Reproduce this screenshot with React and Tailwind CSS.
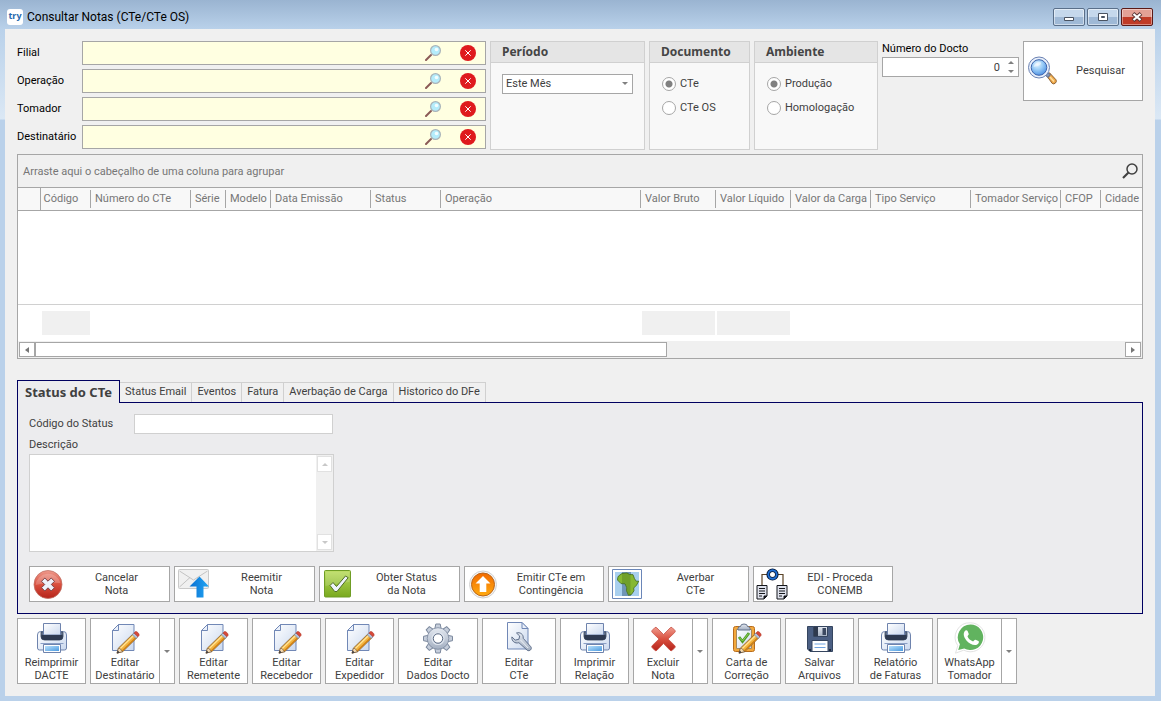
import { useState } from "react";

const filters = ["Filial", "Operação", "Tomador", "Destinatário"];

const columns = [
  { label: "", width: 22 },
  { label: "Código", width: 50, total: true },
  { label: "Número do CTe", width: 100 },
  { label: "Série", width: 35 },
  { label: "Modelo", width: 45 },
  { label: "Data Emissão", width: 100 },
  { label: "Status", width: 70 },
  { label: "Operação", width: 200 },
  { label: "Valor Bruto", width: 75, total: true },
  { label: "Valor Líquido", width: 75, total: true },
  { label: "Valor da Carga", width: 80 },
  { label: "Tipo Serviço", width: 100 },
  { label: "Tomador Serviço", width: 90 },
  { label: "CFOP", width: 40 },
  { label: "Cidade", width: 100 },
];

const tabs = ["Status do CTe", "Status Email", "Eventos", "Fatura", "Averbação de Carga", "Historico do DFe"];

/* Gradients shared by all the icons */
function IconDefs() {
  return (
    <svg className="absolute h-0 w-0" aria-hidden="true">
      <defs>
        <linearGradient id="paper" x1="0" y1="0" x2="1" y2="1">
          <stop offset="0" stopColor="#ffffff" />
          <stop offset="1" stopColor="#cbd9ef" />
        </linearGradient>
        <linearGradient id="steel" x1="0" y1="0" x2="0" y2="1">
          <stop offset="0" stopColor="#e4e9f1" />
          <stop offset="1" stopColor="#a3afc1" />
        </linearGradient>
        <linearGradient id="dark" x1="0" y1="0" x2="0" y2="1">
          <stop offset="0" stopColor="#7385a0" />
          <stop offset="1" stopColor="#232e42" />
        </linearGradient>
        <linearGradient id="red" x1="0" y1="0" x2="0" y2="1">
          <stop offset="0" stopColor="#ef9a8c" />
          <stop offset="0.5" stopColor="#d9503f" />
          <stop offset="1" stopColor="#b5231a" />
        </linearGradient>
        <linearGradient id="green" x1="0" y1="0" x2="0" y2="1">
          <stop offset="0" stopColor="#b9dc5c" />
          <stop offset="1" stopColor="#79a91e" />
        </linearGradient>
        <linearGradient id="orange" x1="0" y1="0" x2="0" y2="1">
          <stop offset="0" stopColor="#f26a00" />
          <stop offset="1" stopColor="#ffab10" />
        </linearGradient>
        <linearGradient id="blue" x1="0" y1="0" x2="1" y2="1">
          <stop offset="0" stopColor="#b9e0fb" />
          <stop offset="1" stopColor="#4c9be0" />
        </linearGradient>
        <linearGradient id="arrow" x1="0" y1="0" x2="1" y2="0">
          <stop offset="0" stopColor="#0a6fd0" />
          <stop offset="1" stopColor="#22a7f5" />
        </linearGradient>
        <radialGradient id="lens" cx="0.4" cy="0.3" r="0.8">
          <stop offset="0" stopColor="#e3f3ff" />
          <stop offset="0.4" stopColor="#9fd0f8" />
          <stop offset="1" stopColor="#3f86e0" />
        </radialGradient>
      </defs>
    </svg>
  );
}

function Icon({ children }) {
  return (
    <svg viewBox="0 0 32 32" className="h-8 w-8 shrink-0" fill="none" aria-hidden="true">
      {children}
    </svg>
  );
}

function Pencil() {
  return (
    <g>
      <path d="M9.5 26 24.3 11.6l4 3.8L13.8 29.6 8 31.2z" fill="#f3b33e" stroke="#7e5a32" strokeWidth="0.8" />
      <path d="M11.2 26.6 25.2 13" stroke="#ffe49a" strokeWidth="1.3" />
      <path d="m13.3 28.9 14-13.6" stroke="#cf7f14" strokeWidth="1.2" />
      <path d="m8 31.2 1.5-5.2 2.2 1.1.5 1.3 1.6 1.2z" fill="#f6dcb2" stroke="#6d5238" strokeWidth="0.6" />
      <path d="m8 31.2.8-2.8 1.9 2z" fill="#30343e" />
      <path d="m23.2 12.7 1.8-1.8 4 3.8-1.9 1.8z" fill="#b6c2da" stroke="#6d7f9f" strokeWidth="0.6" />
      <path d="m25 10.9 1-1c1.5-1.3 5 2 3.9 3.800l-.9 1z" fill="#d94a3a" stroke="#a93529" strokeWidth="0.6" />
    </g>
  );
}

function EditIcon() {
  return (
    <Icon>
      <path d="M9.5 2.5h15.5v26H3.5V8.5z" fill="url(#paper)" stroke="#7188b6" />
      <path d="M9.5 2.5v6h-6z" fill="#eaf0fa" stroke="#7188b6" />
      <Pencil />
    </Icon>
  );
}

function PrinterIcon() {
  return (
    <Icon>
      <path d="M1.5 13q0-3.5 3-3.5h23q3 0 3 3.5v13q0 2-2 2h-25q-2 0-2-2z" fill="url(#paper)" stroke="#6e83ad" />
      <path d="M5 10h22v4.5q0 3.5-3.5 3.5h-15Q5 18 5 14.5z" fill="url(#dark)" stroke="#34415a" strokeWidth="0.8" />
      <path d="M7.5 1.5h17V13h-17z" fill="url(#paper)" stroke="#6e83ad" />
      <path d="M5.500 13h21v1.8q0 2.7-3 2.7h-15q-3 0-3-2.7z" fill="#2e3a51" />
      <path d="M4.5 21.5h23" stroke="#8a9fc6" />
      <path d="M7.5 22.5h17v8h-17z" fill="#fff" stroke="#6e83ad" />
      <path d="M9 24h14v5H9z" fill="url(#blue)" />
    </Icon>
  );
}

function GearIcon() {
  const teeth = [0, 45, 90, 135, 180, 225, 270, 315];
  return (
    <Icon>
      {teeth.map((angle) => (
        <path key={angle} d="m12.8 7 1-5h4.4l1 5z" transform={`rotate(${angle} 16 16.5)`} fill="#c6cedb" stroke="#7c899e" />
      ))}
      <circle cx="16" cy="16.5" r="10.8" fill="url(#steel)" stroke="#7c899e" strokeWidth="0.8" />
      <circle cx="16" cy="16.5" r="6" stroke="#dfe5ee" strokeWidth="1.2" />
      <circle cx="16" cy="16.5" r="4.7" fill="#fff" stroke="#5d6c85" />
    </Icon>
  );
}

function WrenchIcon() {
  return (
    <Icon>
      <path d="M4.5.5H19l6 6V27H4.5z" fill="url(#paper)" stroke="#7188b6" />
      <path d="M19 .5v6h6z" fill="#eaf0fa" stroke="#7188b6" />
      <path
        d="M13.5 11c3.5-1.2 7.2 1.3 6.7 5.3l7.6 8.4c1.7 2.2-1.2 5.2-3.6 3.5l-8.3-7.5c-4 1.2-7.6-1.6-7-5.8l3.3 3.2 3.7-.8.8-3.3z"
        fill="url(#steel)"
        stroke="#5f6f8b"
      />
      <path d="m17.5 18 7.7 8" stroke="#eef2f8" />
    </Icon>
  );
}

function DeleteIcon() {
  return (
    <Icon>
      <path
        d="m5 8.5 3-3q1-.5 2 .5l6.5 6.5L23 6q1-1 2-.5l3 3q.7 1-.3 2L21 17l6.7 6.5q1 1 .3 2l-3 3q-1 .7-2-.3l-6.5-6.700-6.5 6.700q-1 1-2 .3l-3-3q-.7-1 .3-2L12 17l-6.700-6.500q-1-1-.3-2z"
        fill="url(#red)"
        stroke="#c75246"
        strokeWidth="0.8"
      />
    </Icon>
  );
}

function ClipboardIcon() {
  return (
    <Icon>
      <rect x="2.5" y="4.5" width="21" height="25" rx="2" fill="#f3a83c" stroke="#b86c1c" />
      <path d="M5.5 7.5h15v19h-15z" fill="url(#paper)" stroke="#a98a5c" />
      <path d="M7 6.5q0-2 2.5-2 0-2.5 3.5-2.5t3.5 2.5q2.5 0 2.5 2V8H7z" fill="url(#steel)" stroke="#66758e" />
      <path d="m8 15 3.5 4.5L18 11" stroke="#4e9b25" strokeWidth="2.8" />
      <path d="m8.3 15.5 3.2 3.5 6-7.4" stroke="#8fd15b" />
      <Pencil />
    </Icon>
  );
}

function FloppyIcon() {
  return (
    <Icon>
      <path d="M3.5 4.5h25v25H6l-2.5-2.5z" fill="#4b5f83" stroke="#35455f" />
      <path d="M9.5 4.5h14v10h-14z" fill="url(#steel)" stroke="#35455f" />
      <path d="M10 5h4v9h-4z" fill="#2f3a4e" />
      <path d="M18.5 6H22v7h-3.5z" fill="#3b4860" />
      <path d="M8 18.5h16v11H8z" fill="#fff" stroke="#35455f" />
      <path d="M10.5 22h11M10.5 25.5h11" stroke="#6fa3df" />
      <path d="M5 28h2M25 28h2" stroke="#202b3e" strokeWidth="2" />
    </Icon>
  );
}

function WhatsAppIcon() {
  return (
    <Icon>
      <path d="M16.5.8a14.500 14.500 0 1 1-6.7 27.400L1.500 31.200l2.300-7.600A14.500 14.500 0 0 1 16.500.8z" fill="#fff" stroke="#e3e3e3" />
      <path d="M16.500 2.500a12.800 12.800 0 1 1-6.300 24l-6 1.500 1.700-5.700A12.800 12.800 0 0 1 16.500 2.500z" fill="#61b35f" />
      <path
        d="M10.5 9.500c1-1.500 2.500-1.600 3.100-.4l1.100 2.700c.4.900-.9 1.900-1.200 2.500.7 2.400 3.100 4.400 5.600 5.100.7-.4 1.400-2 2.400-1.700l3 1.400c.9.500.3 2.700-1.300 3.500-3.500 1.700-8-1.300-10.300-3.700-2.200-2.400-4.300-6.300-2.400-9.400z"
        fill="#fff"
      />
    </Icon>
  );
}

function CancelIcon() {
  return (
    <Icon>
      <circle cx="16" cy="16.5" r="14" fill="url(#red)" stroke="#c07468" strokeWidth="0.8" />
      <path d="M3.5 17A12.8 12.8 0 0 1 28.5 15Q16 14 3.5 17z" fill="#fff" opacity="0.2" />
      <path
        d="m9.5 13.3 3.3-3.3L16 13.2l3.2-3.2 3.3 3.3-3.2 3.2 3.2 3.2-3.3 3.3-3.2-3.2-3.2 3.2-3.3-3.3 3.2-3.2z"
        fill="#eef2fa"
        stroke="#7c3f42"
        strokeLinejoin="round"
      />
    </Icon>
  );
}

function ResendIcon() {
  return (
    <Icon>
      <rect x="1.5" y="1.5" width="30" height="19" rx="1" fill="#f0f0f0" stroke="#c9c9c9" />
      <path d="m2.5 3 14 9 14-9M2.5 19 13 9.5M30.5 19 20 9.5" stroke="#c3c3c3" />
      <path d="M22.5 8.5 32 18.5h-5.5v11h-7v-11h-7z" fill="url(#arrow)" />
    </Icon>
  );
}

function CheckIcon() {
  return (
    <Icon>
      <rect x="2.5" y="2.5" width="26" height="26.5" rx="1" fill="url(#green)" stroke="#6f9d25" />
      <path d="M3.5 3.5h24V14Q16 15 3.5 18z" fill="#fff" opacity="0.15" />
      <path d="m8 17.5 3-3 3.5 4 9-10.5 2.7 1.7L15 23.5h-2.3z" fill="#eef3fa" stroke="#4f6e25" strokeLinejoin="round" />
    </Icon>
  );
}

function UploadIcon() {
  return (
    <Icon>
      <circle cx="16" cy="16.5" r="13.5" fill="#f4f4f4" stroke="#d2d2d2" />
      <circle cx="16" cy="16.5" r="11.5" fill="url(#orange)" stroke="#b9651c" />
      <path d="m16 8 7.5 7.5h-4.2V24h-6.6v-8.5H8.5z" fill="#fff" />
    </Icon>
  );
}

function AfricaIcon() {
  return (
    <Icon>
      <path d="M1.5 1.5h29v29h-29z" fill="#fff" stroke="#6a86b8" />
      <path d="M4 4h24v24H4z" fill="#a8cfee" />
      <path d="M11 4h9v24h-9z" fill="#6f95b5" />
      <path
        d="M7.5 8 11 5.5l5-.5 2.500 1.500 3.500.2 1.500 4 1.700 2.500h2.500l-2.200 4-2.800 2.800.3 2.800-2.600 3.700-2.900.8-2-4.600.3-2.900-1.700-4-4.100-.2-3.500-3.600.3-2.500z"
        fill="#86b832"
        stroke="#41691a"
        strokeWidth="0.8"
      />
      <path d="M11 6v9l3.600.5 1.700 4-.4 3 2 4.500h1.600V6.700L16 5.500z" fill="#4f7d1e" opacity="0.4" />
    </Icon>
  );
}

function EdiIcon() {
  return (
    <Icon>
      <path d="M6 18V6.5h5M27 18V6.5h-6" stroke="#5a4326" strokeWidth="1.2" />
      <circle cx="16.5" cy="6.5" r="4.3" fill="#fff" stroke="#06152e" strokeWidth="3.6" />
      <circle cx="16.5" cy="6.5" r="4.2" stroke="#1f6fd6" strokeWidth="1.9" />
      {[1, 21].map((x) => (
        <g key={x}>
          <path d={`M${x} 17.5h10v10.5l-3 3h-7z`} fill="#dfe2ec" stroke="#15171c" />
          <path d={`M${x + 2} 20.5h6m-6 2.5h6m-6 2.5h6m-6 2.5h3`} stroke="#15171c" />
          <path d={`M${x + 7} 31v-3h3z`} fill="#15171c" stroke="#15171c" />
        </g>
      ))}
    </Icon>
  );
}

function SearchIcon() {
  return (
    <Icon>
      <path d="m19.5 20.500 3-2.700 6.500 7q1 1.700-.6 3.300-1.700 1.500-3.200.3z" fill="#f0a94a" stroke="#8d6233" />
      <path d="m18 19.500 2.500-2.500 3 3-2.700 2.500z" fill="#8495b5" stroke="#56688c" />
      <path d="m23 22 4 4.500" stroke="#ffe0a0" strokeWidth="1.5" />
      <circle cx="12" cy="12.500" r="10.5" fill="#e9f0fb" stroke="#6b82b3" />
      <circle cx="12" cy="12.500" r="7.8" fill="url(#lens)" stroke="#3d64ac" />
      <path d="M6.5 12A5.6 5.6 0 0 1 14 7.5q1 3-7.500 4.500z" fill="#fff" opacity="0.5" />
    </Icon>
  );
}

function LookupIcon() {
  return (
    <svg viewBox="0 0 16 16" className="h-4 w-4" fill="none" aria-hidden="true">
      <path d="m1 15 5-5" stroke="#8b5a56" strokeWidth="2" strokeLinecap="round" />
      <circle cx="10.5" cy="5.5" r="4.9" fill="#b4ecfb" stroke="#aab3b8" strokeWidth="1.2" />
      <circle cx="11.5" cy="4.5" r="1.8" fill="#f2fdff" />
    </svg>
  );
}

function ClearIcon() {
  return (
    <svg viewBox="0 0 16 16" className="h-4 w-4" aria-hidden="true">
      <circle cx="8" cy="8" r="8" fill="#df1a1d" />
      <path d="m5.3 5.3 5.4 5.4m0-5.4-5.4 5.4" stroke="#fff" />
    </svg>
  );
}

function Triangle({ className = "" }) {
  return (
    <svg viewBox="0 0 6 3" className={`h-[3px] w-1.5 shrink-0 ${className}`} aria-hidden="true">
      <path d="M0 0h6L3 3z" fill="currentColor" />
    </svg>
  );
}

function SideTriangle({ className = "" }) {
  return (
    <svg viewBox="0 0 4 6" className={`h-1.5 w-1 shrink-0 ${className}`} aria-hidden="true">
      <path d="M4 0v6L0 3z" fill="currentColor" />
    </svg>
  );
}

function TitleBar() {
  const control =
    "flex h-[18px] w-8 items-center justify-center rounded-[2px] border border-[#5a6f89] bg-linear-to-b from-[#c5d8ec] from-50% to-[#9fb9d6] to-50% inset-ring inset-ring-white/50";
  return (
    <header className="flex h-[29px] shrink-0 items-center bg-linear-to-b from-[#9ab4d1] to-[#b9d1ea] pt-1 pr-2 pl-[7px]">
      <span className="flex h-4 w-4 items-center justify-center rounded-[3px] bg-white pb-0.5 font-['Noto_Sans',sans-serif] text-[9px] leading-none font-bold text-[#2568ae]">
        try
      </span>
      <h1 className="ml-1 flex-1 text-[12px] text-black">Consultar Notas (CTe/CTe OS)</h1>
      <div className="flex gap-0.5">
        <button type="button" aria-label="Minimizar" className={control}>
          <svg viewBox="0 0 12 10" className="mt-1 h-2.5 w-3">
            <path d="M1.5 3.5h9v3h-9z" fill="#fff" stroke="#4a5361" />
          </svg>
        </button>
        <button type="button" aria-label="Maximizar" className={control}>
          <svg viewBox="0 0 12 10" className="h-2.5 w-3">
            <path d="M1.5 1.5h9v7h-9z" fill="#fff" stroke="#4a5361" />
            <path d="M4.5 4.5h3v1h-3z" fill="#8ba5c4" stroke="#4a5361" />
          </svg>
        </button>
        <button
          type="button"
          aria-label="Fechar"
          className="flex h-[18px] w-8 items-center justify-center rounded-[2px] border border-[#5b1a17] bg-linear-to-b from-[#e3a196] from-50% to-[#c03b27] to-50% inset-ring inset-ring-white/40"
        >
          <svg viewBox="0 0 12 10" className="h-2.5 w-3">
            <path d="m2 1.5 8 7m0-7-8 7" stroke="#5a3535" strokeWidth="4" />
            <path d="m2.5 2 7 6m0-6-7 6" stroke="#fff" strokeWidth="2.2" />
          </svg>
        </button>
      </div>
    </header>
  );
}

function Group({ title, className, children }) {
  return (
    <fieldset className={`${className} flex shrink-0 flex-col border border-[#d0d0d0] bg-[#f8f8f8]`}>
      <h2 className="h-[21px] border-b border-[#d0d0d0] bg-[#e5e5e5] pl-[11px] font-['Noto_Sans',sans-serif] text-[12px] leading-5 font-bold text-[#454545]">
        {title}
      </h2>
      {children}
    </fieldset>
  );
}

function RadioList({ name, options }) {
  return (
    <div className="pt-[9px] pl-3">
      {options.map((option, i) => (
        <label key={option} className="flex h-6 items-center gap-1">
          <input
            type="radio"
            name={name}
            defaultChecked={i === 0}
            className="h-3.5 w-3.5 appearance-none rounded-full border border-[#a6a6a6] bg-white checked:bg-[radial-gradient(circle,#808080_3px,white_4px)]"
          />
          {option}
        </label>
      ))}
    </div>
  );
}

function Filters() {
  return (
    <section className="flex items-stretch gap-1">
      <div className="flex min-w-0 flex-1 flex-col gap-1 pb-px text-black">
        {filters.map((name) => (
          <div key={name} className="flex h-6 items-center">
            <label htmlFor={name} className="w-[65px] shrink-0">
              {name}
            </label>
            <div className="flex h-6 min-w-0 flex-1 items-center border border-[#a6a6a6] bg-[#ffffe1] pr-[9px]">
              <input id={name} className="h-full min-w-0 flex-1 bg-transparent px-1 outline-none" />
              <button type="button" aria-label={`Procurar ${name}`}>
                <LookupIcon />
              </button>
              <button type="button" aria-label={`Limpar ${name}`} className="ml-[19px]">
                <ClearIcon />
              </button>
            </div>
          </div>
        ))}
      </div>

      <Group title="Período" className="w-[155px]">
        <div className="relative mx-[11px] mt-[11px]">
          <select
            aria-label="Período"
            className="block h-5 w-full appearance-none border border-[#a6a6a6] bg-white pl-[3px] outline-none"
          >
            <option>Este Mês</option>
          </select>
          <Triangle className="pointer-events-none absolute top-2 right-[5px] text-[#808080]" />
        </div>
      </Group>

      <Group title="Documento" className="w-[101px]">
        <RadioList name="documento" options={["CTe", "CTe OS"]} />
      </Group>

      <Group title="Ambiente" className="w-[124px]">
        <RadioList name="ambiente" options={["Produção", "Homologação"]} />
      </Group>

      <div className="w-[137px] shrink-0">
        <label htmlFor="docto" className="block h-4 leading-4 text-black">
          Número do Docto
        </label>
        <div className="flex h-5 items-center border border-[#a6a6a6] bg-white">
          <input id="docto" defaultValue="0" className="h-full min-w-0 flex-1 bg-transparent pr-1 text-right outline-none" />
          <div className="flex w-[14px] flex-col items-center gap-1.5 text-[#808080]">
            <button type="button" aria-label="Aumentar">
              <Triangle className="block rotate-180" />
            </button>
            <button type="button" aria-label="Diminuir">
              <Triangle className="block" />
            </button>
          </div>
        </div>
      </div>

      <button type="button" className="flex h-[60px] w-[120px] shrink-0 items-center border border-[#a6a6a6] bg-white pl-[3px]">
        <SearchIcon />
        <span className="flex-1">Pesquisar</span>
      </button>
    </section>
  );
}

function NotesGrid() {
  return (
    <section className="mt-1 flex flex-1 flex-col border border-[#a6a6a6] bg-white text-[#767676]">
      <div className="flex h-[33px] shrink-0 items-center justify-between border-b border-[#a6a6a6] bg-[#f0f0f0] pr-1 pl-[5px]">
        <p className="pt-0.5">Arraste aqui o cabeçalho de uma coluna para agrupar</p>
        <button type="button" aria-label="Localizar" className="text-[#404040]">
          <svg viewBox="0 0 16 16" className="h-4 w-4" fill="none" stroke="currentColor">
            <circle cx="10" cy="6" r="5" strokeWidth="1.5" />
            <path d="M6.5 9.5 1 15" strokeWidth="2.2" />
          </svg>
        </button>
      </div>

      <div className="flex-1 overflow-hidden">
        <table className="w-[1182px] table-fixed border-collapse">
          <colgroup>
            {columns.map((col, i) => (
              <col key={i} style={{ width: col.width }} />
            ))}
          </colgroup>
          <thead>
            <tr className="h-[22px] border-b border-[#a6a6a6] bg-[#f8f8f8]">
              {columns.map((col, i) => (
                <th key={i} className={`p-0 text-left font-normal whitespace-nowrap ${i === 1 ? "border-l border-[#a6a6a6]" : ""}`}>
                  <div className={`h-[18px] leading-[18px] ${i > 1 ? "border-l border-[#a6a6a6] pl-1" : "pl-[3px]"}`}>{col.label}</div>
                </th>
              ))}
            </tr>
          </thead>
          <tbody>
            <tr>
              <td colSpan={columns.length} className="h-[94px] p-0" />
            </tr>
          </tbody>
          <tfoot>
            <tr className="h-[37px] border-t border-[#d0d0d0]">
              {columns.map((col, i) => (
                <td key={i} className="p-0 pl-0.5">
                  {col.total && <div className="h-6 bg-[#f0f0f0]" />}
                </td>
              ))}
            </tr>
          </tfoot>
        </table>
      </div>

      {/* Barra de rolagem horizontal */}
      <div className="flex h-[17px] shrink-0 bg-[#f0f0f0] p-px text-[#767676]">
        <button type="button" aria-label="Rolar para a esquerda" className="flex w-4 items-center justify-center border border-[#a6a6a6] bg-white">
          <SideTriangle />
        </button>
        <div className="flex-1">
          <div className="h-full w-[58%] border border-[#a6a6a6] bg-white" />
        </div>
        <button type="button" aria-label="Rolar para a direita" className="flex w-4 items-center justify-center border border-[#a6a6a6] bg-white">
          <SideTriangle className="rotate-180" />
        </button>
      </div>
    </section>
  );
}

function PanelButton({ icon, top, bottom, className = "w-[141px]" }) {
  return (
    <button type="button" className={`flex h-9 items-center border border-[#a6a6a6] bg-white pl-0.5 leading-[13px] ${className}`}>
      {icon}
      <span className="flex-1 text-center">
        {top}
        <br />
        {bottom}
      </span>
    </button>
  );
}

function StatusPanel() {
  const [active, setActive] = useState(0);
  return (
    <section className="mt-[21px]">
      <div role="tablist" className="flex items-end">
        {tabs.map((tab, i) => (
          <button
            key={tab}
            type="button"
            role="tab"
            aria-selected={i === active}
            onClick={() => setActive(i)}
            className={
              i === active
                ? "relative z-10 -mb-px h-[23px] border border-b-0 border-[#000060] bg-[#ececee] px-[7px] font-['Noto_Sans',sans-serif] text-[13px] leading-5 font-bold text-[#404040]"
                : "h-5 border-t border-r border-[#d0d0d0] bg-[#f0f0f0] px-[5px]"
            }
          >
            {tab}
          </button>
        ))}
      </div>

      <div role="tabpanel" className="border border-[#000060] bg-[#ececee] p-[11px]">
        <div className="flex h-5 items-center">
          <label htmlFor="codigo-status" className="w-[105px]">
            Código do Status
          </label>
          <input id="codigo-status" className="h-5 w-[199px] border border-[#d0d0d0] bg-white px-1 outline-none" />
        </div>
        <label htmlFor="descricao" className="block h-5 leading-[22px]">
          Descrição
        </label>
        <div className="flex h-[98px] w-[305px] border border-[#d0d0d0] bg-white">
          <textarea id="descricao" className="h-full min-w-0 flex-1 resize-none px-1 outline-none" />
          <div className="flex w-[17px] flex-col justify-between bg-[#f0f0f0] p-px text-[#c8c8c8]">
            <button type="button" aria-label="Rolar para cima" className="flex h-4 items-center justify-center border border-[#e1e1e1] bg-white">
              <Triangle className="rotate-180" />
            </button>
            <button type="button" aria-label="Rolar para baixo" className="flex h-4 items-center justify-center border border-[#e1e1e1] bg-white">
              <Triangle />
            </button>
          </div>
        </div>
        <div className="mt-3.5 flex flex-wrap gap-1">
          <PanelButton icon={<CancelIcon />} top="Cancelar" bottom="Nota" />
          <PanelButton icon={<ResendIcon />} top="Reemitir" bottom="Nota" />
          <PanelButton icon={<CheckIcon />} top="Obter Status" bottom="da Nota" />
          <PanelButton icon={<UploadIcon />} top="Emitir CTe em" bottom="Contingência" className="w-[140px]" />
          <PanelButton icon={<AfricaIcon />} top="Averbar" bottom="CTe" />
          <PanelButton icon={<EdiIcon />} top="EDI - Proceda" bottom="CONEMB" className="w-[140px]" />
        </div>
      </div>
    </section>
  );
}

function ToolButton({ icon, top, bottom, className = "w-[69px]", menu = false }) {
  return (
    <div className={`flex h-[66px] border border-[#a6a6a6] bg-white leading-[13px] ${className}`}>
      <button type="button" className="flex min-w-0 flex-1 flex-col items-center pt-[3px]">
        {icon}
        <span className="mt-0.5 text-center whitespace-nowrap">
          {top}
          <br />
          {bottom}
        </span>
      </button>
      {menu && (
        <button
          type="button"
          aria-label={`Mais opções: ${top} ${bottom}`}
          className="flex w-[15px] items-center justify-center border-l border-[#a6a6a6] text-[#808080]"
        >
          <Triangle />
        </button>
      )}
    </div>
  );
}

function Toolbar() {
  return (
    <section className="mt-1 flex flex-wrap gap-1">
      <ToolButton icon={<PrinterIcon />} top="Reimprimir" bottom="DACTE" />
      <ToolButton icon={<EditIcon />} top="Editar" bottom="Destinatário" className="w-[85px]" menu />
      <ToolButton icon={<EditIcon />} top="Editar" bottom="Remetente" />
      <ToolButton icon={<EditIcon />} top="Editar" bottom="Recebedor" />
      <ToolButton icon={<EditIcon />} top="Editar" bottom="Expedidor" />
      <ToolButton icon={<GearIcon />} top="Editar" bottom="Dados Docto" className="w-20" />
      <ToolButton icon={<WrenchIcon />} top="Editar" bottom="CTe" className="w-[74px]" />
      <ToolButton icon={<PrinterIcon />} top="Imprimir" bottom="Relação" />
      <ToolButton icon={<DeleteIcon />} top="Excluir" bottom="Nota" className="w-[75px]" menu />
      <ToolButton icon={<ClipboardIcon />} top="Carta de" bottom="Correção" />
      <ToolButton icon={<FloppyIcon />} top="Salvar" bottom="Arquivos" />
      <ToolButton icon={<PrinterIcon />} top="Relatório" bottom="de Faturas" className="w-[75px]" />
      <ToolButton icon={<WhatsAppIcon />} top="WhatsApp" bottom="Tomador" className="w-20" menu />
    </section>
  );
}

export default function App() {
  return (
    <div className="flex min-h-screen flex-col bg-[#bad1ea] font-[Roboto,sans-serif] text-[11px] text-[#404040]">
      <IconDefs />
      <TitleBar />
      <div className="flex flex-1 flex-col bg-[linear-gradient(#b9d1ea,#dbe8f5_90px,#bad1ea_91px)] pr-1.5 pb-[5px] pl-[5px]">
        <main className="flex flex-1 flex-col bg-[#f0f0f0] p-3">
          <Filters />
          <NotesGrid />
          <StatusPanel />
          <Toolbar />
        </main>
      </div>
    </div>
  );
}
